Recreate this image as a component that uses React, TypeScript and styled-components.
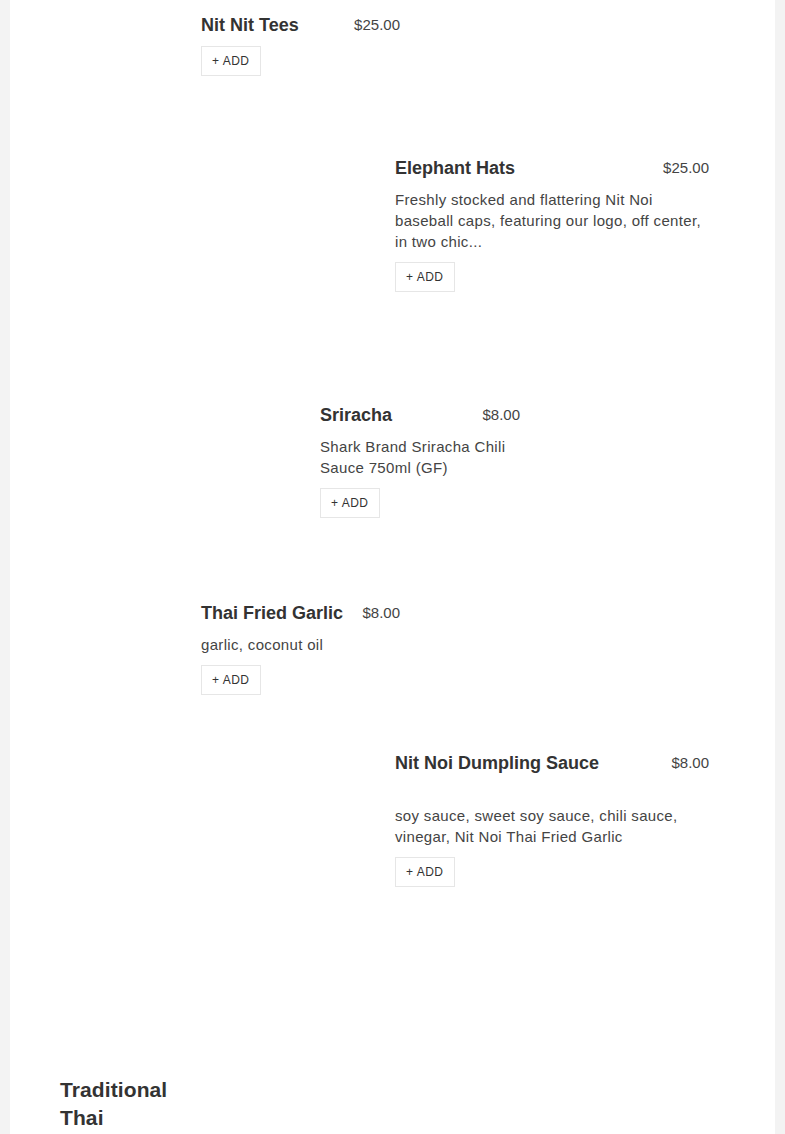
import React from "react";
import styled, { createGlobalStyle } from "styled-components";

const GlobalStyle = createGlobalStyle`
  html, body {
    margin: 0;
    padding: 0;
    background: #f3f3f3;
  }
  body {
    font-family: "Liberation Sans", Arial, Helvetica, sans-serif;
    color: #333;
    overflow: hidden;
  }
`;

const Page = styled.div`
  margin: 0 10px;
  min-height: 1134px;
  background: #ffffff;
  padding: 12px 50px 0 50px;
  box-sizing: border-box;
`;

const ItemList = styled.div`
  display: flex;
  flex-direction: column;
`;

const Item = styled.div<{ $offset: number; $width: number; $space: number }>`
  margin-left: ${(p) => p.$offset}px;
  width: ${(p) => p.$width}px;
  margin-bottom: ${(p) => p.$space}px;
  display: flex;
  flex-direction: column;
  align-items: flex-start;
`;

const TitleRow = styled.div`
  display: flex;
  justify-content: space-between;
  align-items: center;
  width: 100%;
  height: 24px;
  padding-top: 1px;
  gap: 12px;
  margin-bottom: 9px;
`;

const Title = styled.h3`
  margin: 0;
  font-size: 18px;
  line-height: 24px;
  font-weight: 700;
  color: #333;
`;

const Price = styled.span`
  font-size: 15px;
  line-height: 24px;
  color: #444;
  white-space: nowrap;
`;

const Description = styled.p<{ $lead?: boolean }>`
  margin: 0 0 10px 0;
  padding-top: ${(p) => (p.$lead ? 21 : 0)}px;
  font-size: 15px;
  line-height: 21px;
  color: #444;
  letter-spacing: 0.33px;
`;

const AddButton = styled.button`
  height: 30px;
  padding: 0 10px;
  box-sizing: border-box;
  border: 1px solid #e6e6e6;
  background: #ffffff;
  font-family: "Liberation Sans", Arial, Helvetica, sans-serif;
  font-size: 12px;
  letter-spacing: 0.5px;
  color: #333;
  cursor: pointer;
`;

const SectionHeading = styled.h2`
  margin: 0;
  width: 130px;
  font-size: 21px;
  line-height: 28px;
  font-weight: 700;
  letter-spacing: 0.1px;
  color: #333;
`;

type MenuItem = {
  name: string;
  price: string;
  description?: string;
  lead?: boolean;
  offset: number;
  width: number;
  space: number;
};

const items: MenuItem[] = [
  { name: "Nit Nit Tees", price: "$25.00", offset: 141, width: 199, space: 79 },
  {
    name: "Elephant Hats",
    price: "$25.00",
    description:
      "Freshly stocked and flattering Nit Noi baseball caps, featuring our logo, off center, in two chic...",
    offset: 335,
    width: 314,
    space: 110,
  },
  {
    name: "Sriracha",
    price: "$8.00",
    description: "Shark Brand Sriracha Chili Sauce 750ml (GF)",
    offset: 260,
    width: 200,
    space: 82,
  },
  {
    name: "Thai Fried Garlic",
    price: "$8.00",
    description: "garlic, coconut oil",
    offset: 141,
    width: 199,
    space: 55,
  },
  {
    name: "Nit Noi Dumpling Sauce",
    price: "$8.00",
    description: "soy sauce, sweet soy sauce, chili sauce, vinegar, Nit Noi Thai Fried Garlic",
    lead: true,
    offset: 335,
    width: 314,
    space: 189,
  },
];

export default function App() {
  return (
    <>
      <GlobalStyle />
      <Page>
        <ItemList>
          {items.map((it) => (
            <Item key={it.name} $offset={it.offset} $width={it.width} $space={it.space}>
              <TitleRow>
                <Title>{it.name}</Title>
                <Price>{it.price}</Price>
              </TitleRow>
              {it.description && <Description $lead={it.lead}>{it.description}</Description>}
              <AddButton>+ ADD</AddButton>
            </Item>
          ))}
        </ItemList>
        <SectionHeading>Traditional Thai</SectionHeading>
      </Page>
    </>
  );
}
